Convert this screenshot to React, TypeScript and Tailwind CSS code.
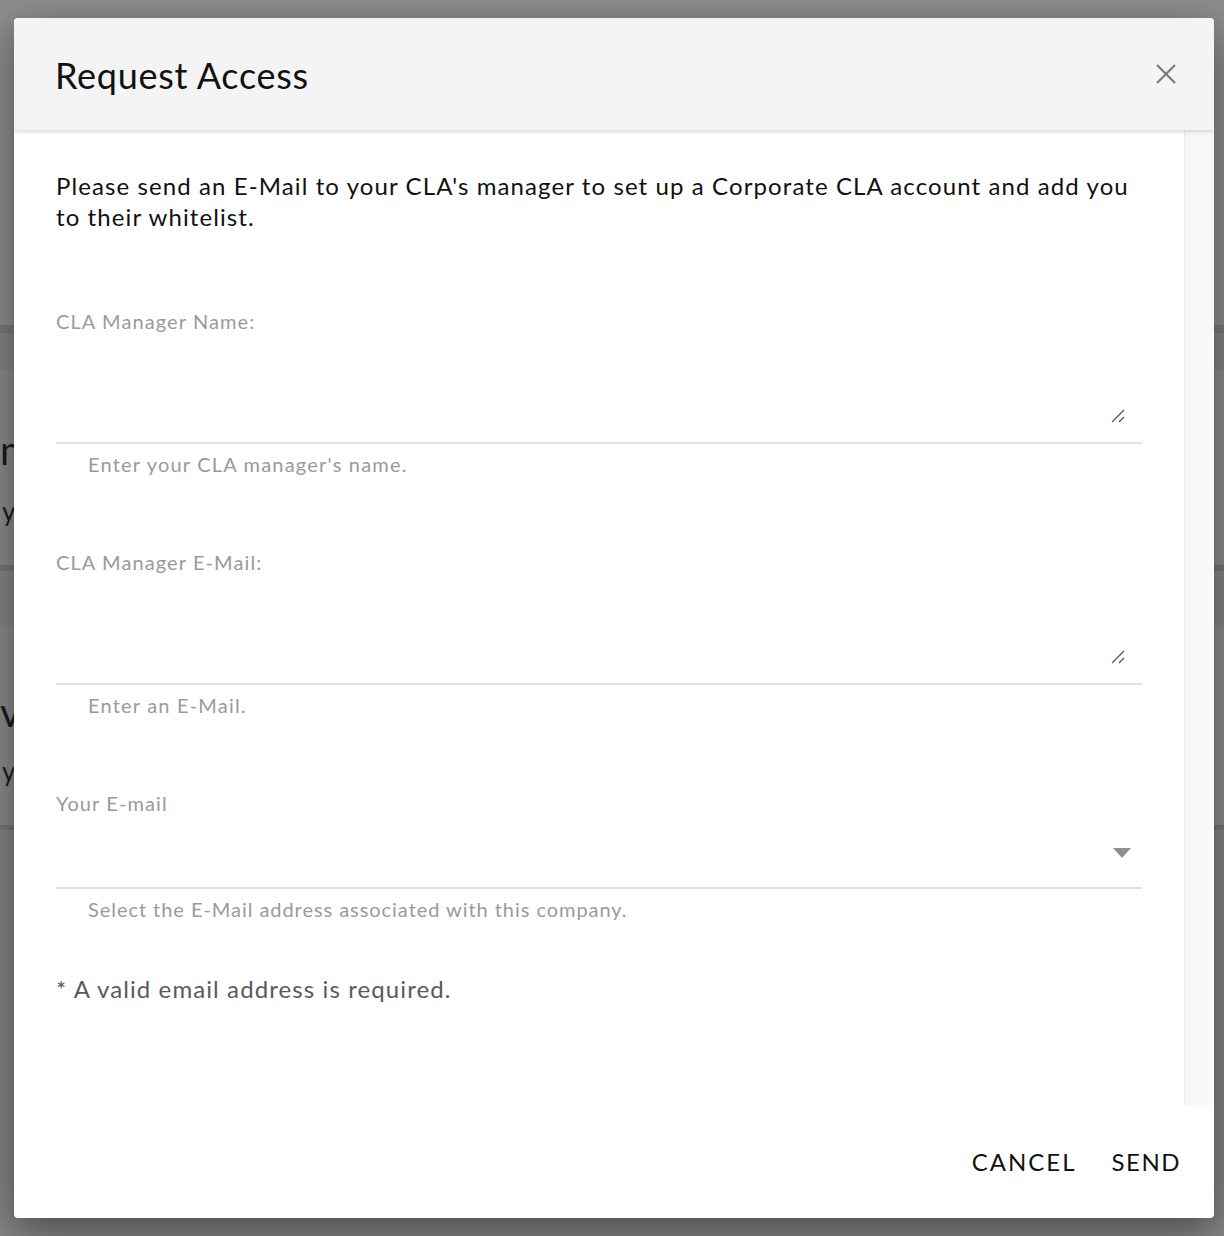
import React from "react";

const font = { fontFamily: "Lato, 'Open Sans', sans-serif" };

const Grip = () => (
  <svg width="16" height="16" viewBox="0 0 16 16" className="text-[#555]">
    <line x1="2" y1="14" x2="14" y2="2" stroke="currentColor" strokeWidth="1.3" />
    <line x1="9" y1="14" x2="14" y2="9" stroke="currentColor" strokeWidth="1.3" />
  </svg>
);

const TextField = ({ label, helper }: { label: string; helper: string }) => (
  <div className="flex flex-col">
    <label className="text-[20px] leading-[28px] tracking-[1.1px] text-[#9a9a9a]">{label}</label>
    <div className="h-[109px] border-b-2 border-[#e2e2e2] flex items-end justify-end pr-[16px] pb-[18px]">
      <Grip />
    </div>
    <p className="mt-[6px] pl-[32px] text-[20px] leading-[28px] tracking-[1.2px] text-[#9a9a9a]">{helper}</p>
  </div>
);

const Backdrop = () => (
  <div className="flex flex-col h-[1236px] bg-[#858585] text-[#1c1c1c]">
    <div className="h-[325px] bg-[#8d8d8d]" />
    <div className="h-[8px] bg-[#7a7a7a]" />
    <div className="h-[37px]" />
    <div className="h-[195px] bg-[#8b8b8b] flex flex-col pt-[58px]">
      <span className="text-[40px] leading-[44px]">m</span>
      <span className="text-[26px] leading-[30px] mt-[24px] ml-[2px]">y</span>
    </div>
    <div className="h-[6px] bg-[#777777]" />
    <div className="h-[57px]" />
    <div className="h-[197px] bg-[#8b8b8b] flex flex-col pt-[62px]">
      <span className="text-[40px] leading-[44px]">vi</span>
      <span className="text-[26px] leading-[30px] mt-[22px] ml-[2px]">y</span>
    </div>
    <div className="h-[5px] bg-[#777777]" />
    <div className="flex-1" />
  </div>
);

export default function App() {
  return (
    <div className="relative w-[1224px] h-[1236px] overflow-hidden" style={font}>
      <Backdrop />
      <div className="absolute left-[14px] top-[18px] w-[1200px] h-[1200px] bg-white rounded-[4px] flex flex-col shadow-[0_12px_40px_rgba(0,0,0,0.45)] overflow-hidden">
        <div className="h-[112px] shrink-0 bg-[#f4f4f4] flex items-center justify-between pl-[41px] pr-[37px] shadow-[0_2px_4px_rgba(0,0,0,0.15)] z-10">
          <h1 className="text-[36px] leading-[44px] tracking-[0.7px] text-[#111] pt-[1px]">Request Access</h1>
          <button className="text-[#7a7a7a]">
            <svg width="22" height="22" viewBox="0 0 22 22">
              <line x1="2" y1="2" x2="20" y2="20" stroke="currentColor" strokeWidth="2.2" />
              <line x1="20" y1="2" x2="2" y2="20" stroke="currentColor" strokeWidth="2.2" />
            </svg>
          </button>
        </div>
        <div className="flex h-[975px]">
          <div className="flex-1 pl-[42px] pr-[42px] pt-[40px]">
            <p className="text-[24px] leading-[31px] tracking-[1.1px] text-[#111]">
              Please send an E-Mail to your CLA's manager to set up a Corporate CLA account and add you
              to their whitelist.
            </p>
            <div className="mt-[75px] flex flex-col gap-[70px]">
              <TextField label="CLA Manager Name:" helper="Enter your CLA manager's name." />
              <TextField label="CLA Manager E-Mail:" helper="Enter an E-Mail." />
            </div>
            <div className="mt-[70px] flex flex-col">
              <label className="text-[20px] leading-[28px] tracking-[1.1px] text-[#9a9a9a]">Your E-mail</label>
              <div className="h-[72px] border-b-2 border-[#e2e2e2] flex items-center justify-end pr-[11px] pt-[2px]">
                <svg width="18" height="10" viewBox="0 0 18 10">
                  <polygon points="0,0 18,0 9,10" fill="#8f8f8f" />
                </svg>
              </div>
              <p className="mt-[6px] pl-[32px] text-[20px] leading-[28px] tracking-[0.95px] text-[#9a9a9a]">
                Select the E-Mail address associated with this company.
              </p>
            </div>
            <p className="mt-[50px] text-[24px] leading-[31px] tracking-[1.1px] text-[#5a5a5a]">
              * A valid email address is required.
            </p>
          </div>
          <div className="w-[30px] shrink-0 bg-[#f8f8f8] border-l border-[#ebebeb]" />
        </div>
        <div className="flex-1 flex items-center justify-end gap-[35px] pr-[33px] pb-[1px]">
          <button className="text-[24px] leading-[31px] tracking-[2px] text-[#111]">CANCEL</button>
          <button className="text-[24px] leading-[31px] tracking-[1.5px] text-[#111]">SEND</button>
        </div>
      </div>
    </div>
  );
}
